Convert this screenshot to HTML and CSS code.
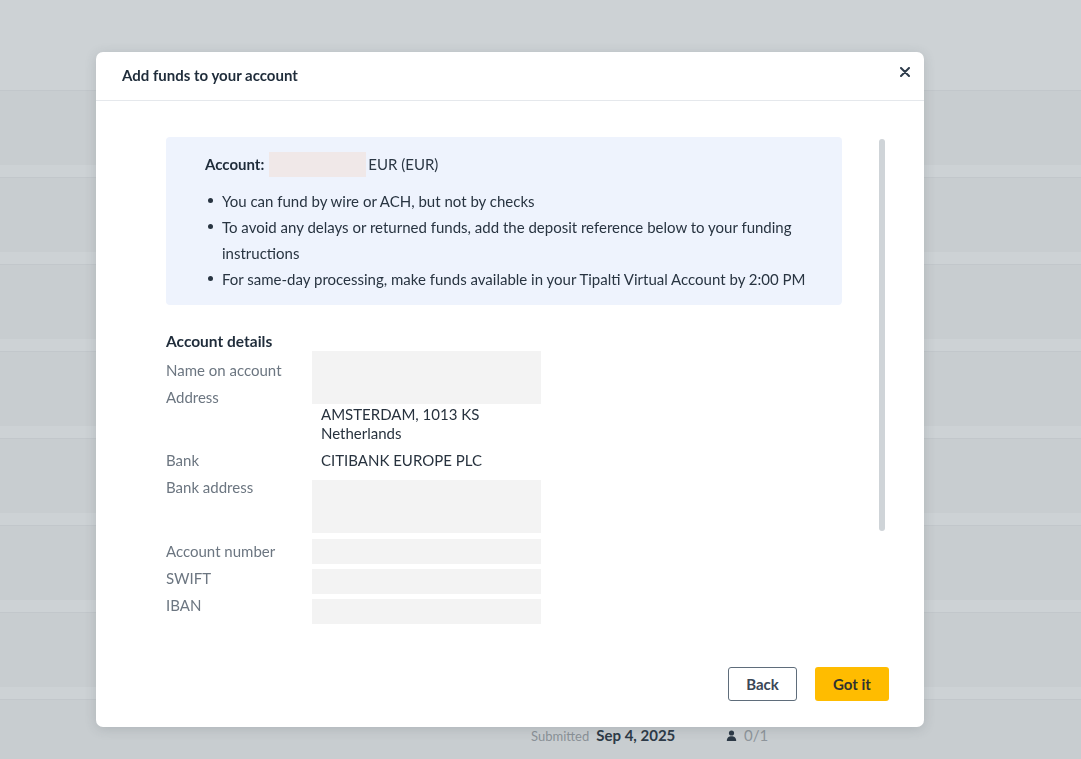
FILE: index.html
```html
<!DOCTYPE html>
<html lang="en">
<head>
<meta charset="utf-8">
<title>Add funds to your account</title>
<link rel="stylesheet" href="styles.css">
</head>
<body>
<div class="page">
  <div class="page-header"></div>
  <div class="list">
    <div class="card"></div>
    <div class="card"></div>
    <div class="card"></div>
    <div class="card"></div>
    <div class="card"></div>
    <div class="card"></div>
    <div class="card"></div>
    <div class="card card-meta">
      <span class="meta-spacer"></span>
      <span class="meta-submitted"><span class="meta-label">Submitted</span><span class="meta-date">Sep 4, 2025</span></span>
      <span class="meta-approvals">
        <svg class="person" width="11" height="11" viewBox="0 0 11 11"><circle cx="5.5" cy="3" r="2.6" fill="#2c3946"/><path d="M0.8 11 C0.8 7.6 3 6.3 5.5 6.3 C8 6.3 10.2 7.6 10.2 11 Z" fill="#2c3946"/></svg>
        <span class="meta-count">0/1</span>
      </span>
    </div>
  </div>
</div>

<div class="modal" role="dialog" aria-labelledby="modal-title">
  <div class="modal-header">
    <h2 id="modal-title" class="modal-title">Add funds to your account</h2>
    <button class="close-btn" aria-label="Close">
      <svg width="10" height="10" viewBox="0 0 10 10"><path d="M1 1 L9 9 M9 1 L1 9" stroke="#2d3b4a" stroke-width="2" stroke-linecap="round"/></svg>
    </button>
  </div>
  <div class="modal-body">
    <div class="content">
      <div class="info-box">
        <div class="account-line">
          <span class="account-label">Account:</span>
          <span class="redact-pink"></span>
          <span class="account-cur">EUR (EUR)</span>
        </div>
        <ul class="info-list">
          <li>You can fund by wire or ACH, but not by checks</li>
          <li>To avoid any delays or returned funds, add the deposit reference below to your funding instructions</li>
          <li>For same-day processing, make funds available in your Tipalti Virtual Account by 2:00 PM</li>
        </ul>
      </div>
      <h3 class="details-title">Account details</h3>
      <div class="details">
        <div class="labels">
          <div class="label">Name on account</div>
          <div class="label">Address</div>
          <div class="label l-bank">Bank</div>
          <div class="label">Bank address</div>
          <div class="label l-accnum">Account number</div>
          <div class="label">SWIFT</div>
          <div class="label">IBAN</div>
        </div>
        <div class="values">
          <div class="redact r-tall"></div>
          <div class="value v-addr">AMSTERDAM, 1013 KS<br>Netherlands</div>
          <div class="value v-bank">CITIBANK EUROPE PLC</div>
          <div class="redact r-tall r-bankaddr"></div>
          <div class="redact r-short r-acc"></div>
          <div class="redact r-short r-next"></div>
          <div class="redact r-short r-next"></div>
        </div>
      </div>
    </div>
    <div class="scroll-track"><div class="scroll-thumb"></div></div>
  </div>
  <div class="modal-footer">
    <button class="btn btn-secondary">Back</button>
    <button class="btn btn-primary">Got it</button>
  </div>
</div>
</body>
</html>
```
FILE: styles.css
```css
* { box-sizing: border-box; }
html, body { margin: 0; padding: 0; }
body {
  font-family: Lato, "Open Sans", Arial, sans-serif;
  background: #cdd2d5;
  width: 1081px;
  height: 759px;
  overflow: hidden;
}
.page { display: flex; flex-direction: column; }
.page-header { height: 90px; background: #cdd2d5; }
.list { display: flex; flex-direction: column; gap: 12px; }
.card {
  height: 75px;
  background: #c8cdd0;
  border-top: 1px solid #c2c7cb;
  flex-shrink: 0;
}
.card-meta {
  display: grid;
  grid-template-columns: 531px 190px auto;
  align-items: center;
  padding-bottom: 4px;
}
.meta-submitted { display: flex; align-items: baseline; gap: 7px; }
.meta-label { font-size: 13px; color: #8a9197; }
.meta-date { font-size: 15px; font-weight: 700; color: #2d3a47; }
.meta-approvals { display: flex; align-items: center; gap: 7px; padding-left: 5px; }
.meta-count { font-size: 15px; color: #8e959b; }

.modal {
  position: fixed;
  left: 96px;
  top: 52px;
  width: 828px;
  height: 675px;
  background: #fff;
  border-radius: 7px;
  box-shadow: 0 2px 12px rgba(60, 70, 80, 0.18);
  display: flex;
  flex-direction: column;
}
.modal-header {
  height: 49px;
  border-bottom: 1px solid #e5e8ec;
  display: flex;
  align-items: center;
  justify-content: space-between;
  padding: 0 14px 2px 26px;
}
.modal-title {
  margin: 0;
  font-size: 15px;
  font-weight: 700;
  color: #1f2c3a;
}
.close-btn {
  border: 0;
  background: none;
  padding: 0;
  width: 10px;
  height: 10px;
  display: flex;
  margin-top: -5px;
}
.modal-body {
  height: 545px;
  display: flex;
  padding: 36px 0 0 70px;
  overflow: hidden;
}
.content { width: 676px; flex-shrink: 0; }
.scroll-track { margin-left: 37px; padding-top: 2px; }
.scroll-thumb {
  width: 6px;
  height: 392px;
  border-radius: 3px;
  background: #cfd4d8;
}

.info-box {
  background: #eef3fd;
  border-radius: 4px;
  padding: 15px 20px 13px 39px;
  color: #283441;
  font-size: 15px;
}
.account-line { display: flex; align-items: center; height: 25px; }
.account-label { font-weight: 700; font-size: 15px; color: #1f2c3a; }
.redact-pink {
  width: 97px;
  height: 25px;
  background: #f0e8e8;
  margin-left: 5px;
  margin-right: 2px;
}
.account-cur { font-size: 15px; color: #2b3744; }
.info-list {
  list-style: none;
  margin: 11px 0 0 0;
  padding: 0;
  line-height: 26px;
}
.info-list li { display: flex; }
.info-list li::before {
  content: "";
  flex: 0 0 auto;
  width: 5px;
  height: 5px;
  border-radius: 50%;
  background: #283441;
  margin: 10.5px 9px 0 3px;
}

.details-title {
  margin: 26px 0 0 0;
  font-size: 15.5px;
  line-height: 20px;
  font-weight: 700;
  color: #1f2c3a;
}
.details { display: flex; font-size: 15px; }
.labels { width: 146px; padding-top: 6.5px; color: #6c7681; }
.label { line-height: 27px; }
.l-bank { margin-top: 36px; }
.l-accnum { margin-top: 37px; }
.values { width: 229px; color: #27323e; }
.redact { background: #f3f3f3; }
.r-tall { height: 53px; }
.r-short { height: 25px; }
.r-bankaddr { margin-top: 9.5px; }
.r-acc { margin-top: 6px; }
.r-next { margin-top: 5px; }
.value { line-height: 19px; padding-left: 9px; }
.v-addr { margin-top: 1.5px; }
.v-bank { margin-top: 8px; }

.modal-footer {
  display: flex;
  justify-content: flex-end;
  gap: 18px;
  padding: 22px 35px 26px 0;
}
.btn {
  height: 34px;
  border-radius: 3px;
  font-family: Lato, "Open Sans", Arial, sans-serif;
  font-size: 15px;
  font-weight: 700;
  padding: 0;
}
.btn-secondary {
  width: 69px;
  background: #fff;
  border: 1.5px solid #5f6d7b;
  color: #3a4756;
}
.btn-primary {
  width: 74px;
  background: #ffbc00;
  border: 0;
  color: #2f3330;
}
```
